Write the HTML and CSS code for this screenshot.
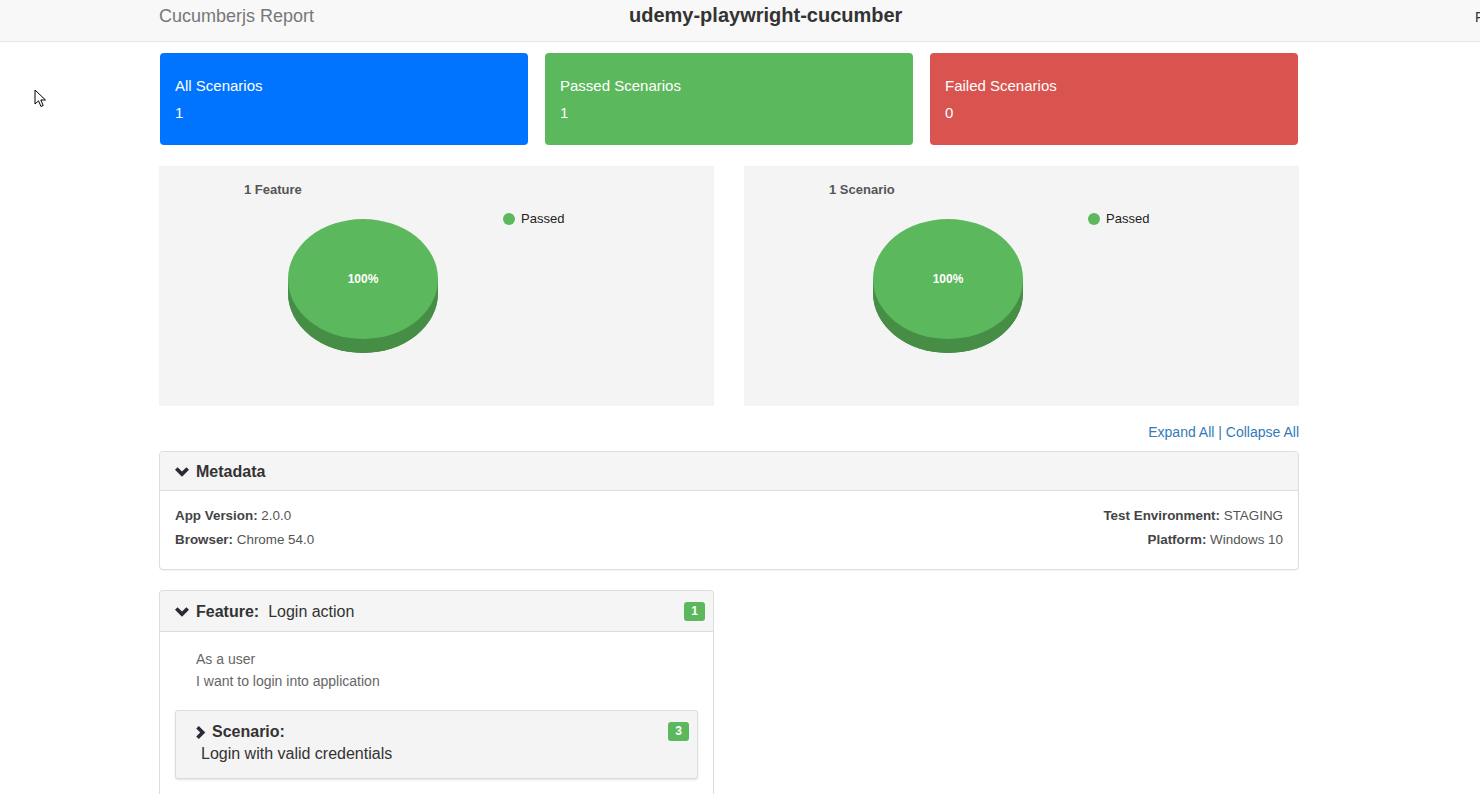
FILE: index.html
```html
<!DOCTYPE html>
<html lang="en">
<head>
<meta charset="utf-8">
<title>Cucumberjs Report</title>
<link rel="stylesheet" href="styles.css">
</head>
<body>
<nav class="navbar">
  <span class="brand">Cucumberjs Report</span>
  <span class="project">udemy-playwright-cucumber</span>
  <span class="nav-right">Features</span>
</nav>

<svg class="cursor" width="14" height="20" viewBox="0 0 14 20"><path d="M1 1 L1 15 L4.5 11.8 L7 17.5 L9.2 16.5 L6.8 11 L11.5 11 Z" fill="#fff" stroke="#000" stroke-width="1" stroke-linejoin="round"/></svg>

<main class="container">
  <section class="cards">
    <div class="card card-all"><div class="card-title">All Scenarios</div><div class="card-num">1</div></div>
    <div class="card card-passed"><div class="card-title">Passed Scenarios</div><div class="card-num">1</div></div>
    <div class="card card-failed"><div class="card-title">Failed Scenarios</div><div class="card-num">0</div></div>
  </section>

  <section class="charts">
    <div class="chart">
      <div class="chart-main">
        <div class="chart-title">1 Feature</div>
        <svg class="pie" width="152" height="136" viewBox="0 0 152 136">
          <path d="M1 60 L1 74 A75 60 0 0 0 151 74 L151 60 Z" fill="#468e46"/>
          <ellipse cx="76" cy="74" rx="75" ry="60" fill="#468e46"/>
          <ellipse cx="76" cy="60" rx="75" ry="60" fill="#5cb85c"/>
          <text x="76" y="64" text-anchor="middle" class="pie-label">100%</text>
        </svg>
      </div>
      <div class="legend"><span class="dot"></span>Passed</div>
    </div>
    <div class="chart">
      <div class="chart-main">
        <div class="chart-title">1 Scenario</div>
        <svg class="pie" width="152" height="136" viewBox="0 0 152 136">
          <path d="M1 60 L1 74 A75 60 0 0 0 151 74 L151 60 Z" fill="#468e46"/>
          <ellipse cx="76" cy="74" rx="75" ry="60" fill="#468e46"/>
          <ellipse cx="76" cy="60" rx="75" ry="60" fill="#5cb85c"/>
          <text x="76" y="64" text-anchor="middle" class="pie-label">100%</text>
        </svg>
      </div>
      <div class="legend"><span class="dot"></span>Passed</div>
    </div>
  </section>

  <div class="toggles"><a href="#">Expand All</a> | <a href="#">Collapse All</a></div>

  <section class="panel">
    <div class="panel-heading">
      <svg class="chev-down" width="14" height="10" viewBox="0 0 14 10"><path d="M0 2.8 L2.6 0.2 L7 4.6 L11.4 0.2 L14 2.8 L7 9.8 Z" fill="#2b2b35"/></svg>
      <span class="heading-bold">Metadata</span>
    </div>
    <div class="panel-body meta">
      <div class="meta-col">
        <div><b>App Version:</b> 2.0.0</div>
        <div><b>Browser:</b> Chrome 54.0</div>
      </div>
      <div class="meta-col meta-right">
        <div><b>Test Environment:</b> STAGING</div>
        <div><b>Platform:</b> Windows 10</div>
      </div>
    </div>
  </section>

  <section class="panel feature">
    <div class="panel-heading">
      <svg class="chev-down" width="14" height="10" viewBox="0 0 14 10"><path d="M0 2.8 L2.6 0.2 L7 4.6 L11.4 0.2 L14 2.8 L7 9.8 Z" fill="#2b2b35"/></svg>
      <span class="heading-bold">Feature:</span>
      <span class="heading-text">Login action</span>
      <span class="badge">1</span>
    </div>
    <div class="panel-body">
      <div class="description">
        <div>As a user</div>
        <div>I want to login into application</div>
      </div>
      <div class="scenario">
        <div class="scenario-top">
          <svg class="chev-right" width="10" height="13" viewBox="0 0 10 13"><path d="M2.8 0 L0.2 2.6 L4.2 6.5 L0.2 10.4 L2.8 13 L9.3 6.5 Z" fill="#2b2b35"/></svg>
          <span class="heading-bold">Scenario:</span>
          <span class="badge">3</span>
        </div>
        <div class="scenario-name">Login with valid credentials</div>
      </div>
    </div>
  </section>
</main>
</body>
</html>
```

FILE: styles.css
```css
* { box-sizing: border-box; }

html, body {
  margin: 0;
  padding: 0;
  overflow: hidden;
  background: #fff;
  font-family: "Liberation Sans", Arial, sans-serif;
  color: #333;
}

.navbar {
  display: flex;
  align-items: flex-start;
  height: 42px;
  padding-top: 5px;
  padding-left: 159px;
  background: #f8f8f8;
  border-bottom: 1px solid #e7e7e7;
  white-space: nowrap;
  overflow: hidden;
}

.brand {
  flex: 0 0 470px;
  font-size: 18px;
  line-height: 22px;
  color: #777;
}

.project {
  flex: 0 0 846px;
  font-size: 20px;
  line-height: 20px;
  font-weight: bold;
  color: #333;
}

.nav-right {
  flex: 0 0 auto;
  font-size: 14px;
  line-height: 20px;
  padding-top: 2px;
  color: #333;
}

.cursor {
  position: absolute;
  left: 34px;
  top: 89px;
}

.container {
  width: 1140px;
  margin-left: 159px;
}

.cards {
  display: flex;
  gap: 17px;
  margin-top: 11px;
  padding-left: 1px;
}

.card {
  width: 368px;
  height: 92px;
  border-radius: 4px;
  padding: 23px 15px 22px;
  color: #fff;
  font-size: 15px;
  line-height: 20px;
}

.card-title { margin-bottom: 7px; }

.card-all { background: #0073ff; }
.card-passed { background: #5cb85c; }
.card-failed { background: #d9534f; }

.charts {
  display: flex;
  gap: 30px;
  margin-top: 21px;
}

.chart {
  width: 555px;
  height: 240px;
  background: #f4f4f4;
  display: flex;
  padding: 16px 0 0 85px;
}

.chart-main {
  width: 195px;
  display: flex;
  flex-direction: column;
}

.chart-title {
  font-size: 13px;
  line-height: 15px;
  font-weight: bold;
  color: #555;
}

.pie {
  margin-top: 22px;
  margin-left: 43px;
}

.pie-label {
  font-family: "Liberation Sans", Arial, sans-serif;
  font-size: 12px;
  font-weight: bold;
  fill: #fff;
}

.legend {
  margin-left: 64px;
  padding-top: 29px;
  font-size: 13px;
  line-height: 16px;
  color: #222;
  display: flex;
  align-items: flex-start;
}

.dot {
  width: 12px;
  height: 12px;
  border-radius: 50%;
  background: #5cb85c;
  margin-top: 2px;
  margin-right: 6px;
}

.toggles {
  text-align: right;
  font-size: 14px;
  line-height: 20px;
  margin-top: 16px;
  margin-bottom: 9px;
  color: #337ab7;
}

.toggles a {
  color: #337ab7;
  text-decoration: none;
}

.panel {
  border: 1px solid #ddd;
  border-radius: 4px;
  background: #fff;
  box-shadow: 0 1px 1px rgba(0,0,0,0.05);
}

.panel-heading {
  display: flex;
  align-items: center;
  padding: 10px 8px 8px 15px;
  background: #f5f5f5;
  border-bottom: 1px solid #ddd;
  border-radius: 3px 3px 0 0;
  font-size: 16px;
  line-height: 20px;
}

.chev-down { margin-right: 7px; }

.heading-bold {
  font-weight: bold;
  color: #333;
}

.heading-text {
  margin-left: 9px;
  color: #333;
}

.badge {
  margin-left: auto;
  background: #5cb85c;
  color: #fff;
  font-size: 12px;
  font-weight: bold;
  line-height: 13px;
  padding: 3px 7px;
  border-radius: 3px;
}

.meta {
  display: flex;
  justify-content: space-between;
  padding: 13px 15px 17px;
  font-size: 13.4px;
  line-height: 24px;
  color: #555;
}

.meta b { color: #444; }

.meta-right { text-align: right; }

.feature {
  width: 555px;
  margin-top: 20px;
  border-bottom: none;
  border-radius: 4px 4px 0 0;
  height: 220px;
}

.feature .panel-heading {
  padding-top: 11px;
  padding-bottom: 9px;
}

.feature .badge {
  margin-top: -2px;
}

.feature .panel-body {
  padding: 16px 15px 0;
}

.description {
  padding-left: 21px;
  font-size: 14px;
  line-height: 22px;
  color: #666;
  margin-bottom: 18px;
}

.scenario {
  background: #f4f4f4;
  border: 1px solid #ddd;
  border-radius: 3px;
  box-shadow: 0 1px 2px rgba(0,0,0,0.12);
  padding: 10px 8px 13px 20px;
  font-size: 16px;
  line-height: 22px;
}

.scenario-top {
  display: flex;
  align-items: center;
}

.scenario .badge {
  margin-top: -2px;
}

.chev-right { margin-right: 6px; }

.scenario-name {
  padding-left: 5px;
  color: #333;
}
```
